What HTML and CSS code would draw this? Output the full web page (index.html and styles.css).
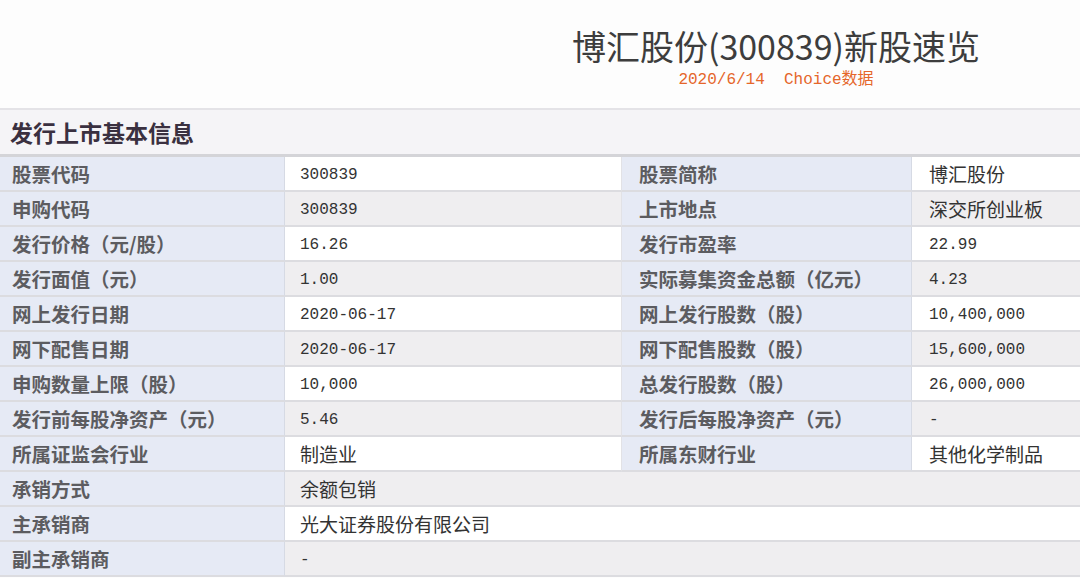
FILE: index.html
```html
<!DOCTYPE html>
<html lang="zh-CN">
<head>
<meta charset="utf-8">
<title>博汇股份(300839)新股速览</title>
<link rel="stylesheet" href="styles.css">
</head>
<body>
<header class="top">
  <div class="title-block">
    <h1 class="title">博汇股份(300839)新股速览</h1>
    <div class="subtitle">2020/6/14&nbsp;&nbsp;Choice数据</div>
  </div>
</header>
<section class="info">
  <h2 class="section-head">发行上市基本信息</h2>
  <div class="grid">
    <div class="lbl">股票代码</div><div class="val num odd">300839</div><div class="lbl lbl2">股票简称</div><div class="val v2 odd">博汇股份</div>
    <div class="lbl">申购代码</div><div class="val num even">300839</div><div class="lbl lbl2">上市地点</div><div class="val v2 even">深交所创业板</div>
    <div class="lbl">发行价格（元/股）</div><div class="val num odd">16.26</div><div class="lbl lbl2">发行市盈率</div><div class="val v2 num odd">22.99</div>
    <div class="lbl">发行面值（元）</div><div class="val num even">1.00</div><div class="lbl lbl2">实际募集资金总额（亿元）</div><div class="val v2 num even">4.23</div>
    <div class="lbl">网上发行日期</div><div class="val num odd">2020-06-17</div><div class="lbl lbl2">网上发行股数（股）</div><div class="val v2 num odd">10,400,000</div>
    <div class="lbl">网下配售日期</div><div class="val num even">2020-06-17</div><div class="lbl lbl2">网下配售股数（股）</div><div class="val v2 num even">15,600,000</div>
    <div class="lbl">申购数量上限（股）</div><div class="val num odd">10,000</div><div class="lbl lbl2">总发行股数（股）</div><div class="val v2 num odd">26,000,000</div>
    <div class="lbl">发行前每股净资产（元）</div><div class="val num even">5.46</div><div class="lbl lbl2">发行后每股净资产（元）</div><div class="val v2 num even">-</div>
    <div class="lbl">所属证监会行业</div><div class="val odd">制造业</div><div class="lbl lbl2">所属东财行业</div><div class="val v2 odd">其他化学制品</div>
    <div class="lbl">承销方式</div><div class="val wide even">余额包销</div>
    <div class="lbl">主承销商</div><div class="val wide odd">光大证券股份有限公司</div>
    <div class="lbl">副主承销商</div><div class="val wide num even">-</div>
  </div>
</section>
</body>
</html>
```
FILE: styles.css
```css
html, body {
  margin: 0;
  padding: 0;
  background: #fdfdfd;
  font-family: "Noto Sans CJK SC", "Noto Sans", sans-serif;
  overflow: hidden;
}

.top {
  height: 108px;
  display: flex;
  justify-content: center;
  padding-left: 472px;
  box-sizing: border-box;
}

.title-block {
  display: flex;
  flex-direction: column;
  align-items: center;
  padding-top: 26px;
}

.title {
  margin: 0;
  font-weight: 400;
  font-size: 34px;
  line-height: 40px;
  color: #3d3d3d;
}

.subtitle {
  margin-top: 4px;
  font-family: "Liberation Mono", "Noto Sans CJK SC", monospace;
  font-size: 16px;
  line-height: 20px;
  color: #e5662a;
}

.info {
  border-top: 2px solid #e4e3e7;
}

.section-head {
  margin: 0;
  height: 44px;
  padding-left: 10px;
  background: #f5f4f7;
  border-bottom: 3px solid #d4d4d8;
  font-size: 23px;
  font-weight: 700;
  line-height: 44px;
  color: #3a3040;
}

.grid {
  display: grid;
  grid-template-columns: 285px 337px 290px 1fr;
  grid-auto-rows: 35px;
}

.grid > div {
  box-sizing: border-box;
  border-bottom: 2px solid #dcdce0;
  display: flex;
  align-items: center;
  white-space: nowrap;
  overflow: hidden;
}

.lbl {
  background: #e6eaf5;
  padding-left: 12px;
  font-size: 19.5px;
  font-weight: 700;
  color: #5c5c60;
  border-right: 1px solid #d6dae4;
}

.lbl2 {
  padding-left: 17px;
}

.val {
  padding-left: 15px;
  font-size: 19px;
  color: #333;
  border-right: 1px solid #e2e2e6;
}

.v2 {
  padding-left: 17px;
  border-right: 0;
}

.num {
  font-family: "Liberation Mono", "Noto Sans CJK SC", monospace;
  font-size: 16px;
  padding-top: 3px;
}

.odd {
  background: #ffffff;
}

.even {
  background: #efeef0;
}

.wide {
  grid-column: 2 / 5;
  border-right: 0;
}
```
